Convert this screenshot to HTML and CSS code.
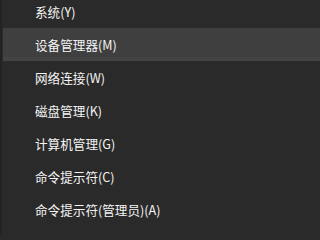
FILE: index.html
```html
<!DOCTYPE html>
<html lang="zh-CN">
<head>
<meta charset="utf-8">
<link rel="stylesheet" href="styles.css">
</head>
<body>
<div class="menu">
  <ul class="list">
    <li class="item">系统(Y)</li>
    <li class="item active">设备管理器(M)</li>
    <li class="item">网络连接(W)</li>
    <li class="item">磁盘管理(K)</li>
    <li class="item">计算机管理(G)</li>
    <li class="item">命令提示符(C)</li>
    <li class="item">命令提示符(管理员)(A)</li>
  </ul>
</div>
</body>
</html>
```
FILE: styles.css
```css
html, body {
  margin: 0;
  padding: 0;
  background: #2a2a2a;
  height: 100%;
  overflow: hidden;
}
.menu {
  border-left: 2px solid #232323;
  height: 100%;
  box-sizing: border-box;
}
.list {
  list-style: none;
  margin: -5px 0 0 1px;
  padding: 0;
  display: flex;
  flex-direction: column;
}
.item {
  height: 33px;
  display: flex;
  align-items: center;
  padding-left: 32px;
  font-family: "Noto Sans CJK SC", "Liberation Sans", sans-serif;
  font-size: 12.6px;
  color: #f4f4f4;
  white-space: nowrap;
}
.item.active {
  background: #3f3f3f;
  box-shadow: inset 0 -4px 0 #444444;
}
```
